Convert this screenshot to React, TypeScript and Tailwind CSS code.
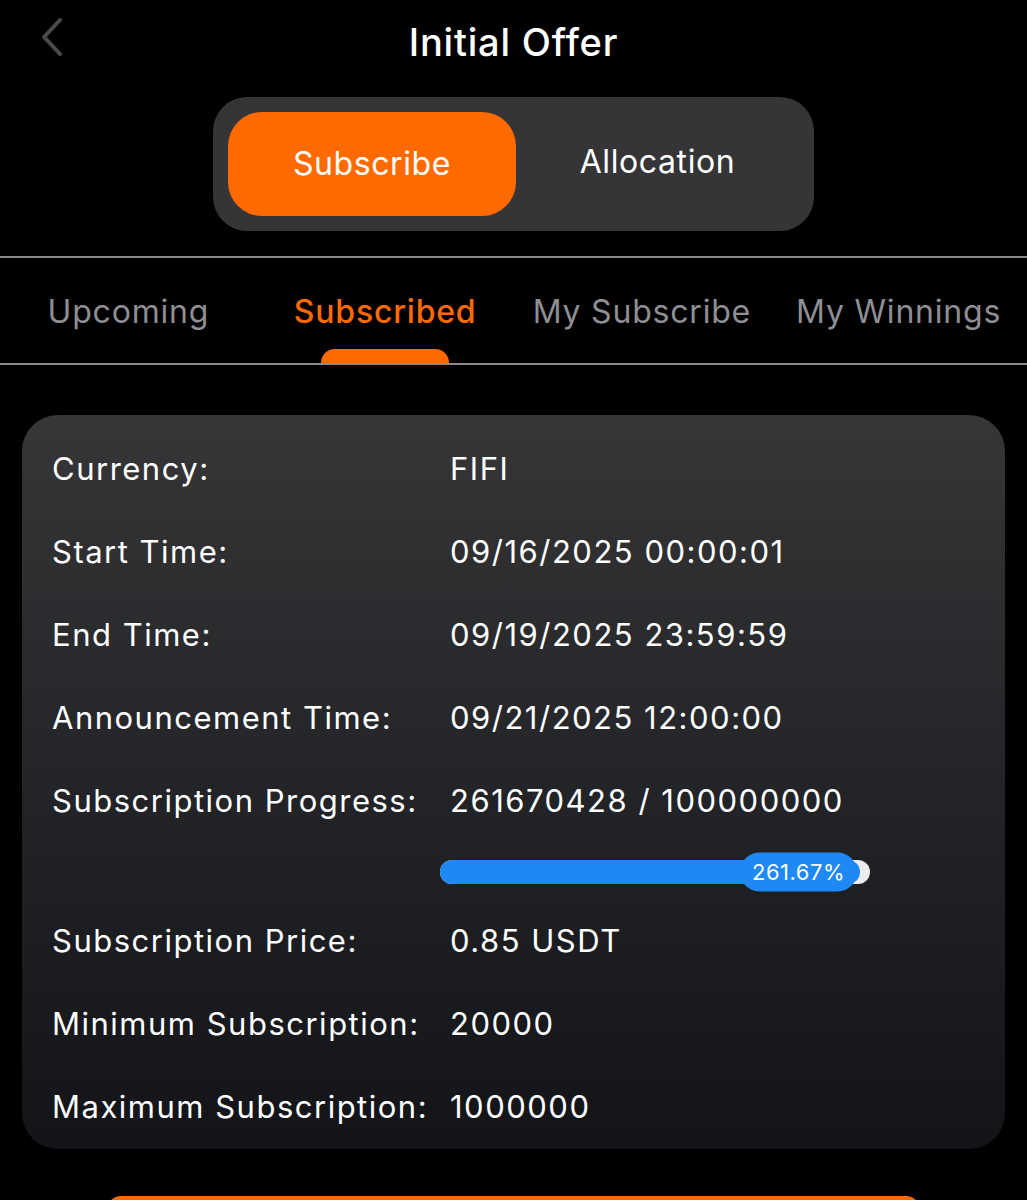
import { useState } from 'react';

type Row = { label: string; value: string };

const rowsTop: Row[] = [
  { label: 'Currency:', value: 'FIFI' },
  { label: 'Start Time:', value: '09/16/2025 00:00:01' },
  { label: 'End Time:', value: '09/19/2025 23:59:59' },
  { label: 'Announcement Time:', value: '09/21/2025 12:00:00' },
  { label: 'Subscription Progress:', value: '261670428 / 100000000' },
];

const rowsBottom: Row[] = [
  { label: 'Subscription Price:', value: '0.85 USDT' },
  { label: 'Minimum Subscription:', value: '20000' },
  { label: 'Maximum Subscription:', value: '1000000' },
];

const tabs = ['Upcoming', 'Subscribed', 'My Subscribe', 'My Winnings'];

const InfoRow = ({ row }: { row: Row }) => (
  <div className="flex h-[83px] items-center">
    <span className="w-[398px] shrink-0 text-white">{row.label}</span>
    <span className="text-white">{row.value}</span>
  </div>
);

const App = () => {
  const [mode, setMode] = useState<'subscribe' | 'allocation'>('subscribe');
  const [tab, setTab] = useState(1);

  return (
    <div className="h-[1200px] overflow-hidden bg-black font-['Inter',sans-serif]">
      {/* header */}
      <div className="relative flex h-[84px] items-center justify-center">
        <svg
          className="absolute left-[36px] top-[16px]"
          width="30"
          height="42"
          viewBox="0 0 30 42"
          fill="none"
        >
          <path d="M24 4 L8 21 L24 38" stroke="#4a4a4c" strokeWidth="4" strokeLinecap="round" strokeLinejoin="round" />
        </svg>
        <h1 className="text-[38px] font-medium tracking-[0.8px] text-white">Initial Offer</h1>
      </div>

      {/* segmented control */}
      <div className="flex justify-center pt-[13px]">
        <div className="flex h-[134px] w-[601px] items-center rounded-[34px] bg-[#353537] px-[15px]">
          <button
            type="button"
            onClick={() => setMode('subscribe')}
            className={`h-[104px] w-[288px] rounded-[34px] text-[32px] tracking-[0.6px] text-white ${mode === 'subscribe' ? 'bg-[#ff6a00]' : ''}`}
          >
            Subscribe
          </button>
          <button
            type="button"
            onClick={() => setMode('allocation')}
            className={`h-[104px] flex-1 rounded-[34px] pb-[4px] text-[32px] tracking-[0.6px] text-white ${mode === 'allocation' ? 'bg-[#ff6a00]' : ''}`}
          >
            Allocation
          </button>
        </div>
      </div>

      {/* tabs */}
      <div className="mt-[25px] border-y-2 border-[#8a8a8c]">
        <div className="flex h-[105px]">
          {tabs.map((t, i) => (
            <button
              key={t}
              type="button"
              onClick={() => setTab(i)}
              className={`relative flex flex-1 items-center justify-center pt-[2px] text-[32px] tracking-[0.8px] ${
                tab === i ? 'font-medium text-[#ff6a00]' : 'text-[#8e8e93]'
              }`}
            >
              {t}
              {tab === i && (
                <span className="absolute bottom-0 left-1/2 h-[14px] w-[128px] -translate-x-1/2 rounded-t-full rounded-b-[3px] bg-[#ff6a00]" />
              )}
            </button>
          ))}
        </div>
      </div>

      {/* card */}
      <div className="mx-[22px] mt-[50px] rounded-[36px] bg-gradient-to-b from-[#363638] to-[#121418] px-[30px] pt-[13px] text-[31px] tracking-[1.5px]">
        {rowsTop.map((r) => (
          <InfoRow key={r.label} row={r} />
        ))}
        <div className="flex h-[57px] items-center pl-[388px]">
          <div className="relative h-[24px] w-[430px] rounded-full bg-[#ececec]">
            <div className="h-full w-[420px] rounded-full bg-[#1e88f5]" />
            <div className="absolute right-[13px] top-1/2 flex h-[39px] -translate-y-1/2 items-center rounded-full bg-[#1e88f5] px-[12px] text-[22px] tracking-[0.5px] text-white">
              261.67%
            </div>
          </div>
        </div>
        {rowsBottom.map((r) => (
          <InfoRow key={r.label} row={r} />
        ))}
      </div>

      {/* action button peeking at the bottom */}
      <div className="mx-[107px] mt-[47px] h-[60px] rounded-t-[14px] bg-[#ff6a00]" />
    </div>
  );
};

export default App;
